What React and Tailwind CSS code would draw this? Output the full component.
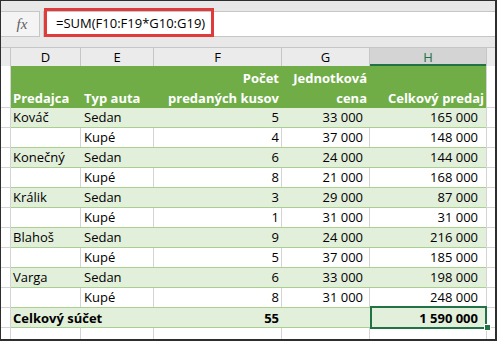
const rows = [
  ['Kováč', 'Sedan', '5', '33 000', '165 000'],
  ['', 'Kupé', '4', '37 000', '148 000'],
  ['Konečný', 'Sedan', '6', '24 000', '144 000'],
  ['', 'Kupé', '8', '21 000', '168 000'],
  ['Králik', 'Sedan', '3', '29 000', '87 000'],
  ['', 'Kupé', '1', '31 000', '31 000'],
  ['Blahoš', 'Sedan', '9', '24 000', '216 000'],
  ['', 'Kupé', '5', '37 000', '185 000'],
  ['Varga', 'Sedan', '6', '33 000', '198 000'],
  ['', 'Kupé', '8', '31 000', '248 000'],
]

function DataRow({ r, band }) {
  const line = band ? 'border-transparent' : 'border-[#d4d4d4]'
  return (
    <div className="flex h-[20px]">
      <div className="w-[10px] shrink-0 border-r border-b border-[#d4d4d4]" />
      <div className={`flex border-b border-[#a9d08e] ${band ? 'bg-[#e2efda]' : 'bg-white'}`}>
        <div className={`w-[70px] border-r ${line} pl-[2px] leading-[19px]`}>{r[0]}</div>
        <div className={`w-[73px] border-r ${line} pl-[3px] leading-[19px]`}>{r[1]}</div>
        <div className={`w-[128px] border-r ${line} pr-[2px] text-right leading-[19px]`}>{r[2]}</div>
        <div className={`w-[88px] border-r ${line} pr-[6px] text-right leading-[19px]`}>{r[3]}</div>
        <div className="w-[116px] pr-[8px] text-right leading-[19px]">{r[4]}</div>
      </div>
      <div className="flex-1 border-l border-b border-[#d4d4d4]" />
    </div>
  )
}

export default function App() {
  return (
    <div className="w-[497px] h-[341px] overflow-hidden flex flex-col bg-[#e8e8e8] border-l border-t border-r-2 border-b-2 border-[#2e2e2e] text-[13px] text-black" style={{ fontFamily: '"Open Sans", sans-serif' }}>
      {/* formula bar */}
      <div className="h-[10px] shrink-0" />
      <div className="flex h-[26px] shrink-0">
        <div className="w-[39px] flex items-center justify-center bg-[#f4f4f4] border-y border-r border-[#c6c6c6]">
          <span className="text-[15px] italic text-[#5f5f5f] pl-[4px]" style={{ fontFamily: '"Liberation Serif", serif' }}>fx</span>
        </div>
        <div className="w-[3px]" />
        <div className="flex-1 bg-white border-y border-l border-[#c6c6c6] flex items-center relative">
          <div className="absolute left-0 top-[-4px] w-[170px] h-[29px] border-[3px] border-[#e03b3b]" />
          <span className="pl-[12px] text-[13px]">=SUM(F10:F19*G10:G19)</span>
        </div>
      </div>
      <div className="h-[10px] shrink-0" />

      {/* column headers */}
      <div className="flex h-[19px] shrink-0 border-t border-[#c6c6c6] bg-[#ebebeb] leading-[18px]">
        <div className="w-[10px] border-r border-[#c6c6c6]" />
        <div className="w-[70px] border-r border-[#c6c6c6] text-center">D</div>
        <div className="w-[73px] border-r border-[#c6c6c6] text-center">E</div>
        <div className="w-[128px] border-r border-[#c6c6c6] text-center">F</div>
        <div className="w-[88px] border-r border-[#c6c6c6] text-center">G</div>
        <div className="w-[116px] bg-[#d4d4d4] border-b-2 border-[#217346] text-center text-[#217346]">H</div>
        <div className="flex-1 border-l border-[#c6c6c6]" />
      </div>

      <div className="flex-1 bg-white flex flex-col">
        {/* table header */}
        <div className="flex h-[42px] shrink-0">
          <div className="w-[10px] shrink-0 border-r border-b border-[#d4d4d4]" />
          <div className="flex bg-[#70ad47] text-white font-bold leading-[20px] pt-[2px]">
            <div className="w-[70px] pl-[2px] flex items-end">Predajca</div>
            <div className="w-[73px] pl-[3px] flex items-end">Typ auta</div>
            <div className="w-[128px] pr-[3px] text-right">Počet<br />predaných kusov</div>
            <div className="w-[88px] pr-[3px] text-right">Jednotková<br />cena</div>
            <div className="w-[116px] pr-[2px] flex items-end justify-end">Celkový predaj</div>
          </div>
          <div className="flex-1 border-l border-b border-[#d4d4d4]" />
        </div>

        {rows.map((r, i) => (
          <DataRow key={i} r={r} band={i % 2 === 0} />
        ))}

        {/* total row */}
        <div className="flex h-[20px] shrink-0">
          <div className="w-[10px] shrink-0 border-r border-b border-[#d4d4d4]" />
          <div className="flex bg-[#e2efda] font-bold leading-[20px] border-b border-[#a9d08e]">
            <div className="w-[143px] pl-[2px] whitespace-nowrap">Celkový súčet</div>
            <div className="w-[128px] pr-[3px] text-right">55</div>
            <div className="w-[88px]" />
            <div className="w-[116px] pr-[8px] text-right relative">
              1 590 000
              <div className="absolute left-0 top-[-2px] w-[117px] h-[23px] border-2 border-[#217346]" />
              <div className="absolute right-[-5px] bottom-[-4px] w-[7px] h-[7px] bg-[#217346] border border-white" />
            </div>
          </div>
          <div className="flex-1 border-l border-b border-[#d4d4d4]" />
        </div>

        {/* empty row */}
        <div className="flex flex-1">
          <div className="w-[10px] border-r border-[#d4d4d4]" />
          <div className="w-[70px] border-r border-[#d4d4d4]" />
          <div className="w-[73px] border-r border-[#d4d4d4]" />
          <div className="w-[128px] border-r border-[#d4d4d4]" />
          <div className="w-[88px] border-r border-[#d4d4d4]" />
          <div className="w-[116px]" />
          <div className="flex-1 border-l border-[#d4d4d4]" />
        </div>
      </div>
    </div>
  )
}
